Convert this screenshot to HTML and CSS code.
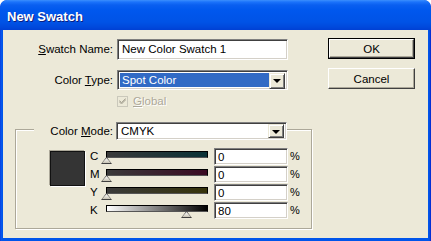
FILE: index.html
```html
<!DOCTYPE html>
<html lang="en">
<head>
  <meta charset="UTF-8">
  <title>New Swatch</title>
  <link rel="stylesheet" href="styles.css">
</head>
<body>
<div class="window">
  <div class="titlebar"><span class="title">New Swatch</span></div>
  <div class="client">
    <div class="form">
      <div class="fields">
        <div class="row row-name">
          <label class="lbl"><u>S</u>watch Name:</label>
          <div class="textbox">New Color Swatch 1</div>
        </div>
        <div class="row row-type">
          <label class="lbl">Color <u>T</u>ype:</label>
          <div class="combo">
            <span class="combo-val selected">Spot Color</span>
            <span class="drop"><span class="arrow"></span></span>
          </div>
        </div>
        <div class="row row-check">
          <span class="lbl"></span>
          <div class="check">
            <svg width="11" height="11" viewBox="0 0 11 11">
              <rect x="0.5" y="0.5" width="10" height="10" fill="#ece9d8" stroke="#cac8bb"/>
              <path d="M2.5 5 L4.5 7 L8.5 3 M2.5 6 L4.5 8 L8.5 4 M2.5 4.5 L4.5 6.5 L8.5 2.5" fill="none" stroke="#aca899" stroke-width="1"/>
            </svg>
            <span class="disabled"><u>G</u>lobal</span>
          </div>
        </div>
      </div>

      <div class="group">
        <div class="legend">
          <label class="lbl">Color <u>M</u>ode:</label>
          <div class="combo combo-mode">
            <span class="combo-val">CMYK</span>
            <span class="drop"><span class="arrow"></span></span>
          </div>
        </div>
        <div class="group-body">
          <div class="swatch"></div>
          <div class="sliders">
            <div class="slider">
              <span class="letter">C</span>
              <div class="track track-c"><span class="thumb" style="left: 0%"></span></div>
              <div class="value">0</div>
              <span class="pct">%</span>
            </div>
            <div class="slider">
              <span class="letter">M</span>
              <div class="track track-m"><span class="thumb" style="left: 0%"></span></div>
              <div class="value">0</div>
              <span class="pct">%</span>
            </div>
            <div class="slider">
              <span class="letter">Y</span>
              <div class="track track-y"><span class="thumb" style="left: 0%"></span></div>
              <div class="value">0</div>
              <span class="pct">%</span>
            </div>
            <div class="slider">
              <span class="letter">K</span>
              <div class="track track-k"><span class="thumb" style="left: 80%"></span></div>
              <div class="value">80</div>
              <span class="pct">%</span>
            </div>
          </div>
        </div>
      </div>
    </div>

    <div class="buttons">
      <div class="btn btn-default"><span class="btn-face">OK</span></div>
      <div class="btn"><span class="btn-face">Cancel</span></div>
    </div>
  </div>
</div>
</body>
</html>
```

FILE: styles.css
```css
body {
  margin: 0;
  padding: 0;
  background: #fff;
  font-family: "Liberation Sans", Arial, sans-serif;
  font-size: 11.5px;
  color: #000;
}

.window {
  width: 431px;
  height: 241px;
  box-sizing: border-box;
  padding: 0 3px 3px 3px;
  border-radius: 7px 7px 0 0;
  background: linear-gradient(to right, #0831d9 0, #0a5aee 1px, #0055ea 2px, #0055ea 429px, #0a44d8 430px, #0019cf 431px);
  display: flex;
  flex-direction: column;
  overflow: hidden;
}

.titlebar {
  height: 30px;
  margin: 0 -3px;
  padding-left: 7px;
  display: flex;
  align-items: center;
  border-radius: 7px 7px 0 0;
  background: linear-gradient(#3c8ffd 0, #1b73fb 2px, #0a5ff0 5px, #0058ee 10px, #0055ea 16px, #0053e6 22px, #0049dc 27px, #0040d4 30px);
}

.title {
  font-weight: bold;
  font-size: 13px;
  color: #fff;
  text-shadow: 1px 1px #0a1e80;
  margin-top: 2px;
}

/* client area */
.client {
  flex: 1;
  background: #ece9d8;
  display: flex;
}

.form {
  width: 309px;
}

.fields {
  padding-top: 9px;
}

.row {
  display: flex;
  align-items: center;
}

.row-name {
  height: 20px;
}

.row-type {
  height: 19px;
  margin-top: 11px;
}

.row-check {
  height: 12px;
  margin-top: 6px;
}

.lbl {
  width: 110px;
  text-align: right;
  margin-right: 4px;
  flex: none;
}

.textbox,
.combo,
.value {
  box-sizing: border-box;
  background: #fff;
  border: 1px solid;
  border-color: #808080 #fff #fff #808080;
  box-shadow: inset 1px 1px #404040, inset -1px -1px #d4d0c8;
}

.textbox {
  width: 171px;
  height: 21px;
  padding: 2px 0 0 4px;
  line-height: 15px;
}

.combo {
  width: 171px;
  height: 20px;
  padding: 2px;
  display: flex;
}

.combo-val {
  flex: 1;
  line-height: 15px;
  padding-left: 2px;
}

.selected {
  background: #316ac5;
  color: #fff;
}

.drop {
  width: 16px;
  height: 16px;
  box-sizing: border-box;
  background: #ece9d8;
  border: 1px solid;
  border-color: #ece9d8 #404040 #404040 #ece9d8;
  box-shadow: inset 1px 1px #fff, inset -1px -1px #808080;
  display: flex;
  align-items: center;
  justify-content: center;
}

.arrow {
  width: 0;
  height: 0;
  border-left: 4px solid transparent;
  border-right: 4px solid transparent;
  border-top: 4px solid #000;
  margin-top: 1px;
}

.check {
  display: flex;
  align-items: center;
  gap: 5px;
}

.check svg {
  display: block;
}

.disabled {
  color: #aca899;
  text-shadow: 1px 1px #fff;
}

/* colour mode group */
.group {
  margin: 22px 0 0 12px;
  width: 297px;
  height: 100px;
  box-sizing: border-box;
  border: 1px solid #aca899;
  box-shadow: inset 1px 1px #fff, 1px 1px #fff;
}

.legend {
  display: flex;
  align-items: center;
  height: 18px;
  margin: -8px 0 0 18px;
  width: 253px;
  background: #ece9d8;
}

.legend .lbl {
  width: 79px;
  margin-right: 3px;
}

.combo-mode {
  width: 172px;
  height: 18px;
  padding: 1px 2px;
}

.combo-mode .drop {
  height: 14px;
}

.group-body {
  display: flex;
  margin-top: 8px;
  padding-left: 34px;
}

.swatch {
  width: 35px;
  height: 35px;
  box-sizing: border-box;
  margin-top: 3px;
  background: #343434;
  border: 1px solid #111;
  box-shadow: 1px 1px #fff, -1px -1px #aca899;
}

.sliders {
  margin-left: 5px;
}

.slider {
  display: flex;
  align-items: flex-start;
  height: 18px;
}

.letter {
  width: 16px;
  line-height: 14px;
  margin-top: 1px;
}

.track {
  position: relative;
  width: 102px;
  height: 7px;
  box-sizing: border-box;
  margin-top: 3px;
  border: 1px solid #000;
  border-bottom-color: #555;
}

.track-c {
  background: linear-gradient(to right, #3a3a3a, #0a3236);
}

.track-m {
  background: linear-gradient(to right, #3a3a3a, #3a0a22);
}

.track-y {
  background: linear-gradient(to right, #3a3a3a, #36340a);
}

.track-k {
  background: linear-gradient(to right, #fff, #000);
}

.thumb {
  position: absolute;
  top: 5px;
  width: 11px;
  height: 7px;
  margin-left: -6px;
  background: #404040;
  clip-path: polygon(50% 0, 100% 100%, 0 100%);
}

.thumb::after {
  content: "";
  position: absolute;
  left: 1px;
  top: 1px;
  width: 9px;
  height: 5px;
  background: linear-gradient(#fff, #c8c4b4);
  clip-path: polygon(50% 0, 100% 100%, 0 100%);
}

.value {
  width: 74px;
  height: 17px;
  margin-left: 6px;
  padding: 1px 0 0 3px;
  line-height: 14px;
}

.pct {
  margin-left: 2px;
  line-height: 16px;
  font-size: 11px;
}

/* buttons */
.buttons {
  margin-left: 16px;
  padding-top: 8px;
  display: flex;
  flex-direction: column;
  gap: 9px;
}

.btn {
  width: 87px;
  height: 21px;
  box-sizing: border-box;
  border: 1px solid;
  border-color: #fff #404040 #404040 #fff;
  box-shadow: inset -1px -1px #aca899;
  background: #ece9d8;
  display: flex;
}

.btn-face {
  flex: 1;
  display: flex;
  align-items: center;
  justify-content: center;
}

.btn-default {
  border: 1px solid #000;
  box-shadow: none;
}

.btn-default .btn-face {
  border: 1px solid;
  border-color: #fff #404040 #404040 #fff;
  box-shadow: inset -1px -1px #aca899;
}
```
